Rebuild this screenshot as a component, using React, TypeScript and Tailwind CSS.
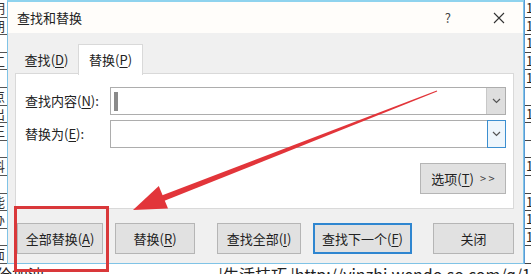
import type { ReactNode } from 'react';

const font = { fontFamily: '"Noto Sans CJK SC", "Liberation Sans", sans-serif' };

function Key({ k }: { k: string }) {
  return (
    <>
      (<span className="underline underline-offset-2">{k}</span>)
    </>
  );
}

function Btn({ w, children, primary }: { w: string; children: ReactNode; primary?: boolean }) {
  return (
    <div
      className={`${w} h-[31px] flex items-center justify-center text-[13px] text-[#222] bg-[#e1e1e1] ${
        primary ? 'border-2 border-[#2f86d0]' : 'border border-[#b5b5b5]'
      }`}
    >
      {children}
    </div>
  );
}

function Combo({ focused, caret }: { focused?: boolean; caret?: boolean }) {
  return (
    <div className="flex-1 h-[28px] flex border border-[#adadad] bg-white">
      <div className="flex-1 flex items-center pl-[3px]">
        {caret && <div className="w-[4px] h-[19px] bg-[#8a8a8a]" />}
      </div>
      <div
        className={`w-[19px] flex items-center justify-center ${
          focused ? 'border border-[#3c8fd0] bg-[#eef6fc] -m-px h-[28px]' : 'bg-[#dedede] border-l border-[#c8c8c8]'
        }`}
      >
        <svg width="9" height="6" viewBox="0 0 9 6">
          <path d="M1 1l3.5 3.5L8 1" fill="none" stroke="#555" strokeWidth="1.2" />
        </svg>
      </div>
    </div>
  );
}

const rightRows = ['1', '1', '1', '1', '1', '', '1', '', '', '1', '', '1', '1', '1', ''];
const leftRows = ['明', '朗', '', '工', '', '点', '出', '正', '', '科', '', '能', '办', '', '面'];

export default function App() {
  return (
    <div className="relative w-[531px] h-[274px] overflow-hidden bg-white" style={font}>
      <div className="flex h-[264px]">
        <div className="w-[7px] overflow-hidden flex flex-col bg-white">
          {leftRows.map((c, i) => (
            <div key={i} className="h-[17.6px] border-b border-[#555] text-[13px] leading-[16px] text-[#333] -ml-[8px] overflow-hidden">
              {c}
            </div>
          ))}
        </div>

        <div className="flex-1 flex flex-col border border-[#7fc3e6] border-t-2 border-t-[#8fd3ee]">
          <div className="h-[31px] flex items-center bg-[#fffdfa] text-[13px] text-[#222]">
            <span className="ml-[9px] flex-1">查找和替换</span>
            <span className="text-[13px] text-[#444] mr-[42px]">?</span>
            <svg width="12" height="12" viewBox="0 0 12 12" className="mr-[18px]">
              <path d="M1 1l10 10M11 1L1 11" stroke="#333" strokeWidth="1.1" />
            </svg>
          </div>

          <div className="flex-1 flex flex-col bg-[#f0f0f0] pl-[7px] pr-[9px] pt-[10px]">
            <div className="flex items-end h-[31px] text-[13px] text-[#222]">
              <div className="w-[63px] h-[28px] flex items-center justify-center border-b border-[#d9d9d9]">
                查找<Key k="D" />
              </div>
              <div className="w-[65px] h-[31px] -mb-px relative z-10 flex items-center justify-center bg-white border border-b-0 border-[#d9d9d9]">
                替换<Key k="P" />
              </div>
              <div className="flex-1 border-b border-[#d9d9d9]" />
            </div>

            <div className="h-[135px] bg-white border border-t-0 border-[#d9d9d9] pl-[9px] pr-[7px] pt-[13px] flex flex-col text-[13px] text-[#222]">
              <div className="flex items-center">
                <span className="w-[85px]">
                  查找内容<Key k="N" />:
                </span>
                <Combo caret />
              </div>
              <div className="flex items-center mt-[5px]">
                <span className="w-[85px]">
                  替换为<Key k="E" />:
                </span>
                <Combo focused />
              </div>
              <div className="flex justify-end mt-[15px]">
                <Btn w="w-[86px]">
                  选项<Key k="T" />
                  <span className="ml-[6px] text-[11px] text-[#444]">&gt; &gt;</span>
                </Btn>
              </div>
            </div>

            <div className="flex mt-[14px] text-[13px]">
              <div className="ml-[2px]">
                <Btn w="w-[86px]">
                  全部替换<Key k="A" />
                </Btn>
              </div>
              <div className="ml-[12px]">
                <Btn w="w-[80px]">
                  替换<Key k="R" />
                </Btn>
              </div>
              <div className="ml-[22px]">
                <Btn w="w-[84px]">
                  查找全部<Key k="I" />
                </Btn>
              </div>
              <div className="ml-[12px]">
                <Btn w="w-[99px]" primary>
                  查找下一个<Key k="F" />
                </Btn>
              </div>
              <div className="ml-[21px]">
                <Btn w="w-[81px]">关闭</Btn>
              </div>
            </div>
          </div>
        </div>

        <div className="w-[7px] overflow-hidden flex flex-col bg-white border-l border-[#5a9ad6]">
          {rightRows.map((c, i) => (
            <div key={i} className="h-[17.6px] border-b border-[#444] text-[13px] leading-[16px] text-[#222] pl-[1px] overflow-hidden">
              {c}
            </div>
          ))}
        </div>
      </div>

      <div className="flex text-[16px] leading-[20px] text-[#222] whitespace-nowrap">
        <span className="w-[230px] -ml-[4px]">佮加油</span>
        <span>|生活技巧 |http://yinzhi.wendo.so.com/q/1</span>
      </div>

      <svg className="absolute inset-0 pointer-events-none" width="531" height="274" viewBox="0 0 531 274">
        <polygon points="437.2,91.5 436.8,90.5 161.7,195.5 163.9,201.1" fill="#e2353a" />
        <polygon points="133,210 158.8,186 168,208.5" fill="#e2353a" />
        <rect x="15.5" y="207.5" width="92" height="63" fill="none" stroke="#d9383a" strokeWidth="3" />
      </svg>
    </div>
  );
}
